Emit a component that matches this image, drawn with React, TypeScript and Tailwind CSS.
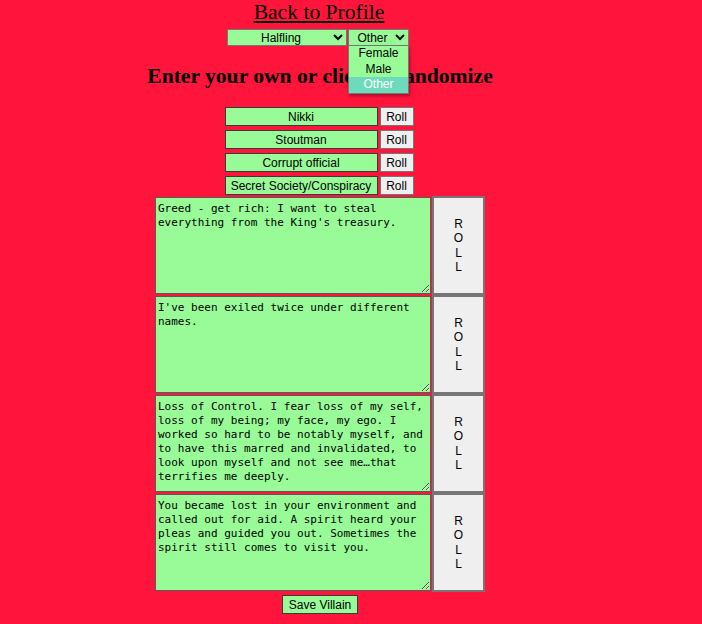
const rows = [
  { value: "Nikki" },
  { value: "Stoutman" },
  { value: "Corrupt official" },
  { value: "Secret Society/Conspiracy" },
];

const blurbs = [
  "Greed - get rich: I want to steal everything from the King's treasury.",
  "I've been exiled twice under different names.",
  "Loss of Control. I fear loss of my self, loss of my being; my face, my ego. I worked so hard to be notably myself, and to have this marred and invalidated, to look upon myself and not see me…that terrifies me deeply.",
  "You became lost in your environment and called out for aid. A spirit heard your pleas and guided you out. Sometimes the spirit still comes to visit you.",
];

export default function App() {
  return (
    <div className="min-h-[624px] bg-[#ff143c] font-['Liberation_Serif',serif] text-black">
      <div className="w-[640px] flex flex-col items-center">
        <a href="#" className="text-[21.6px] leading-[25px] underline mr-[2px]">Back to Profile</a>

        <div className="relative mt-[4px] mr-[4px] flex font-['Liberation_Sans',Arial,sans-serif] text-[12px]">
          <select defaultValue="Halfling" className="w-[120px] h-[17px] bg-[#98fb98] border border-[#767676] [text-align-last:center] text-black">
            <option>Halfling</option>
            <option>Human</option>
            <option>Elf</option>
          </select>
          <select defaultValue="Other" className="ml-px w-[61px] h-[17px] bg-[#98fb98] border border-[#767676] [text-align-last:center] text-black">
            <option>Female</option>
            <option>Male</option>
            <option>Other</option>
          </select>
          <div className="absolute left-[121px] top-[16px] w-[61px] z-10 bg-[#98fb98] border border-[#767676] shadow-[1px_2px_3px_rgba(0,0,0,0.35)] text-center leading-[15.5px] text-[12px]">
            <div>Female</div>
            <div>Male</div>
            <div className="bg-[#6ddbbb] text-white">Other</div>
          </div>
        </div>

        <h2 className="mt-[18px] text-[21.6px] leading-[25px] font-bold">Enter your own or click to randomize</h2>

        <div className="mt-[18px] mr-[2px] flex flex-col gap-[4px] font-['Liberation_Sans',Arial,sans-serif] text-[12px]">
          {rows.map((r) => (
            <div key={r.value} className="flex gap-[2px]">
              <input
                defaultValue={r.value}
                className="w-[153px] h-[19px] bg-[#98fb98] border border-[#3a3a3a] text-center text-black"
              />
              <button className="w-[34px] h-[19px] bg-[#efefef] border border-[#767676] text-black">Roll</button>
            </div>
          ))}
        </div>

        <div className="mt-[1px] flex flex-col">
          {blurbs.map((b, i) => (
            <div key={i} className="flex items-center h-[99px]">
              <textarea
                defaultValue={b}
                className="w-[276px] h-[97px] bg-[#98fb98] border border-[#5a5a5a] px-[2px] pt-[4px] pb-[2px] font-['DejaVu_Sans_Mono',monospace] text-[11px] leading-[14px] text-black overflow-hidden"
              />
              <button className="ml-px w-[53px] h-[99px] bg-[#efefef] border-2 border-[#767676] font-['Liberation_Sans',Arial,sans-serif] text-[12px] leading-[14.5px] text-black flex flex-col items-center justify-center">
                <span>R</span>
                <span>O</span>
                <span>L</span>
                <span>L</span>
              </button>
            </div>
          ))}
        </div>

        <button className="mt-[3px] w-[76px] h-[19px] bg-[#98fb98] border border-[#3a3a3a] font-['Liberation_Sans',Arial,sans-serif] text-[12px] text-black">
          Save Villain
        </button>
      </div>
    </div>
  );
}
